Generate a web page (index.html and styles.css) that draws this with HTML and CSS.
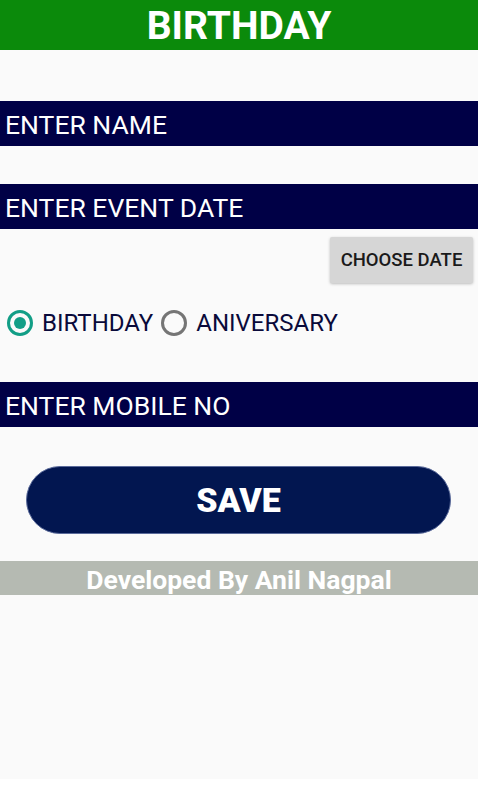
FILE: index.html
```html
<!DOCTYPE html>
<html lang="en">
<head>
    <meta charset="UTF-8">
    <meta name="viewport" content="width=device-width, initial-scale=1.0">
    <title>Birthday</title>
    <link rel="stylesheet" href="styles.css">
</head>
<body>
    <div class="app">
        <div class="title-bar">BIRTHDAY</div>

        <div class="field first">ENTER NAME</div>
        <div class="field">ENTER EVENT DATE</div>

        <div class="date-row">
            <button class="date-btn">CHOOSE DATE</button>
        </div>

        <div class="radio-group">
            <label class="radio">
                <input type="radio" name="event" checked>
                <span class="dot"></span>
                BIRTHDAY
            </label>
            <label class="radio">
                <input type="radio" name="event">
                <span class="dot"></span>
                ANIVERSARY
            </label>
        </div>

        <div class="field mobile">ENTER MOBILE NO</div>

        <div class="save-row">
            <button class="save-btn">SAVE</button>
        </div>

        <div class="footer">Developed By Anil Nagpal</div>
    </div>
</body>
</html>
```

FILE: styles.css
```css
body {
    margin: 0;
    background: #ffffff;
    font-family: Roboto, "Noto Sans", sans-serif;
}
.app {
    width: 478px;
    height: 779px;
    background: #fafafa;
    display: flex;
    flex-direction: column;
}
.title-bar {
    height: 50px;
    background: #0b8a0b;
    color: #ffffff;
    font-size: 39px;
    font-weight: 700;
    text-align: center;
    line-height: 53px;
}
.field {
    height: 45px;
    line-height: 47px;
    margin-top: 38px;
    padding-left: 5px;
    background: #000046;
    color: #ffffff;
    font-size: 26.5px;
}
.field.first {
    margin-top: 51px;
}
.date-row {
    display: flex;
    justify-content: flex-end;
    padding: 8px 5px 0 0;
}
.date-btn {
    width: 143px;
    height: 46px;
    border: none;
    border-radius: 2px;
    background: #d6d6d6;
    color: #1a1a1a;
    font-family: inherit;
    font-size: 18.5px;
    font-weight: 500;
    box-shadow: 0 1px 3px rgba(0, 0, 0, 0.25);
}
.radio-group {
    display: flex;
    align-items: center;
    gap: 8px;
    height: 40px;
    margin-top: 20px;
    padding-left: 7px;
}
.radio {
    display: flex;
    align-items: center;
    gap: 9px;
    color: #0a0a3a;
    font-size: 24px;
}
.radio input {
    display: none;
}
.dot {
    width: 20px;
    height: 20px;
    border: 3px solid #757575;
    border-radius: 50%;
    display: flex;
    align-items: center;
    justify-content: center;
}
.radio input:checked + .dot {
    border-color: #129e86;
}
.radio input:checked + .dot::after {
    content: "";
    width: 12px;
    height: 12px;
    border-radius: 50%;
    background: #129e86;
}
.field.mobile {
    margin-top: 39px;
}
.save-row {
    padding: 39px 27px 0 26px;
}
.save-btn {
    width: 100%;
    height: 68px;
    border: 1px solid #5a6a9a;
    border-radius: 34px;
    background: #021650;
    color: #ffffff;
    font-family: inherit;
    font-size: 34px;
    font-weight: 900;
}
.footer {
    margin-top: 27px;
    height: 34px;
    line-height: 37px;
    background: #b5bab2;
    color: #ffffff;
    font-size: 26.5px;
    font-weight: 700;
    text-align: center;
}
```
